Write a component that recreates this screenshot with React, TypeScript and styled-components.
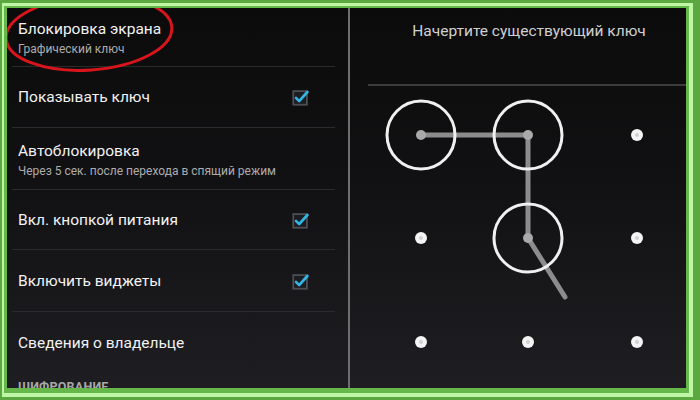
import React from "react";
import styled, { createGlobalStyle } from "styled-components";

const GlobalStyle = createGlobalStyle`
  html, body { margin: 0; padding: 0; background: #000; }
  * { box-sizing: border-box; }
`;

const Screen = styled.div`
  position: relative;
  width: 700px;
  height: 400px;
  overflow: hidden;
  display: flex;
  background: linear-gradient(180deg, #0b0b0b 0%, #111113 45%, #1f1f23 100%);
  font-family: Roboto, "Noto Sans", "DejaVu Sans", sans-serif;
`;

const LeftPane = styled.div`
  width: 348px;
  padding-top: 7px;
  padding-left: 7px;
  display: flex;
  flex-direction: column;
`;

const VDivider = styled.div`
  width: 2px;
  background: #6e6e6e;
`;

const RightPane = styled.div`
  flex: 1;
  display: flex;
  flex-direction: column;
`;

const Row = styled.div<{ $h: number }>`
  height: ${(p) => p.$h}px;
  margin: 0 13px 0 5px;
  padding: 0 24px 0 6px;
  display: flex;
  align-items: center;
  justify-content: space-between;
  border-bottom: 1px solid #2b2b2d;
`;

const LastRow = styled(Row)`
  border-bottom: none;
`;

const TextBlock = styled.div`
  display: flex;
  flex-direction: column;
  gap: 3px;
  padding-top: 3px;
`;

const Title = styled.div`
  color: #f2f2f2;
  font-size: 15.5px;
  line-height: 20px;
  white-space: nowrap;
`;

const Subtitle = styled.div`
  color: #acacac;
  font-size: 12px;
  line-height: 15px;
  white-space: nowrap;
`;

const SectionHeader = styled.div`
  padding: 6px 0 0 11px;
  color: #a8a8a8;
  font-size: 12.5px;
  line-height: 15px;
  font-weight: 700;
  letter-spacing: 0.2px;
`;

const PatternTitle = styled.div`
  height: 84px;
  padding: 21px 0 0 8px;
  text-align: center;
  color: #d0d0d0;
  font-size: 15.5px;
  line-height: 20px;
`;

const HLine = styled.div`
  height: 2px;
  margin-left: 18px;
  background: #3c3c3e;
`;

const CheckBoxWrap = styled.div`
  width: 20px;
  height: 20px;
  display: flex;
  align-items: center;
  justify-content: center;
`;

const Frame = styled.div`
  position: absolute;
  inset: 0;
  pointer-events: none;
  border-style: solid;
  border-color: #5aa83f;
  border-width: 3px 7px 3px 2px;
`;

const FrameMid = styled.div`
  width: 100%;
  height: 100%;
  border-style: solid;
  border-color: #bff6a6;
  border-width: 3px 4px 4px 2px;
`;

const FrameInner = styled.div`
  width: 100%;
  height: 100%;
  border-style: solid;
  border-color: #66b84a;
  border-width: 2px 3px 5px 3px;
`;

const EllipseLayer = styled.svg`
  position: absolute;
  left: 0;
  top: 0;
  pointer-events: none;
`;

const CheckBox = () => (
  <CheckBoxWrap>
    <svg width="22" height="22" viewBox="0 0 22 22">
      <rect x="2.5" y="4.5" width="15" height="15" fill="#1b1d20" stroke="#4a4d52" strokeWidth="2" />
      <path d="M5.5 12 L9 15.5 L18 5.5" fill="none" stroke="#33b5e5" strokeWidth="3" strokeLinecap="round" strokeLinejoin="round" />
    </svg>
  </CheckBoxWrap>
);

type Item = { title: string; sub?: string; check?: boolean; h: number };

const items: Item[] = [
  { title: "Блокировка экрана", sub: "Графический ключ", h: 60 },
  { title: "Показывать ключ", check: true, h: 61 },
  { title: "Автоблокировка", sub: "Через 5 сек. после перехода в спящий режим", h: 62 },
  { title: "Вкл. кнопкой питания", check: true, h: 60 },
  { title: "Включить виджеты", check: true, h: 62 },
];

const cols = [71, 178, 287];
const rows = [49, 152, 256];
const selected = [
  [71, 49],
  [178, 49],
  [178, 152],
];

const Pattern = () => (
  <svg width="350" height="313" viewBox="0 0 350 313">
    {cols.map((x) =>
      rows.map((y) => {
        const sel = selected.some(([a, b]) => a === x && b === y);
        return sel ? null : (
          <g key={`${x}-${y}`}>
            <circle cx={x} cy={y} r="6" fill="#f4f4f4" />
            <circle cx={x} cy={y} r="2" fill="#d0d0d0" />
          </g>
        );
      })
    )}
    <polyline
      points="71,49 178,49 178,152 215,211"
      fill="none"
      stroke="#8c8c8c"
      strokeWidth="5"
      strokeLinecap="round"
      strokeLinejoin="round"
    />
    {selected.map(([x, y]) => (
      <g key={`s-${x}-${y}`}>
        <circle cx={x} cy={y} r="34" fill="none" stroke="#f0f0f0" strokeWidth="3" />
        <circle cx={x} cy={y} r="5" fill="#a9a9a9" />
      </g>
    ))}
  </svg>
);

export default function App() {
  return (
    <>
      <GlobalStyle />
      <Screen>
        <LeftPane>
          {items.map((it) => (
            <Row key={it.title} $h={it.h}>
              {it.sub ? (
                <TextBlock>
                  <Title>{it.title}</Title>
                  <Subtitle>{it.sub}</Subtitle>
                </TextBlock>
              ) : (
                <Title>{it.title}</Title>
              )}
              {it.check && <CheckBox />}
            </Row>
          ))}
          <LastRow $h={61}>
            <Title>Сведения о владельце</Title>
          </LastRow>
          <SectionHeader>ШИФРОВАНИЕ</SectionHeader>
        </LeftPane>
        <VDivider />
        <RightPane>
          <PatternTitle>Начертите существующий ключ</PatternTitle>
          <HLine />
          <Pattern />
        </RightPane>
        <EllipseLayer width="700" height="400" viewBox="0 0 700 400">
          <ellipse
            cx="89"
            cy="33"
            rx="83"
            ry="37"
            transform="rotate(-4 89 33)"
            fill="none"
            stroke="#d8141c"
            strokeWidth="3"
          />
        </EllipseLayer>
        <Frame>
          <FrameMid>
            <FrameInner />
          </FrameMid>
        </Frame>
      </Screen>
    </>
  );
}
